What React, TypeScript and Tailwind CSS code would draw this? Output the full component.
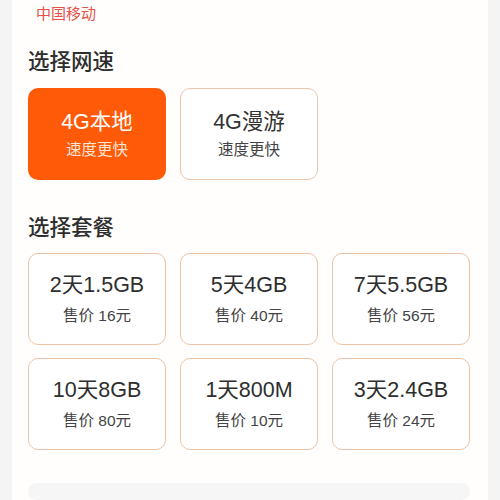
import { useState } from 'react';

const speeds = [
  { id: 'local', name: '4G本地', desc: '速度更快' },
  { id: 'roam', name: '4G漫游', desc: '速度更快' },
];

const packages = [
  { id: 'p1', name: '2天1.5GB', price: 16 },
  { id: 'p2', name: '5天4GB', price: 40 },
  { id: 'p3', name: '7天5.5GB', price: 56 },
  { id: 'p4', name: '10天8GB', price: 80 },
  { id: 'p5', name: '1天800M', price: 10 },
  { id: 'p6', name: '3天2.4GB', price: 24 },
];

export default function App() {
  const [speed, setSpeed] = useState('local');
  const [pkg, setPkg] = useState<string | null>(null);

  return (
    <div
      className="w-[500px] h-[500px] overflow-hidden bg-[#f4f4f4] flex"
      style={{ fontFamily: '"Liberation Sans", "Noto Sans CJK SC", sans-serif' }}
    >
      <div className="ml-3 w-[476px] bg-[#fffefc] pl-4 flex flex-col">
        {/* 运营商 */}
        <div className="pl-2 pt-[5px] h-[26px] text-[15px] leading-[18px] text-[#e4524a]">中国移动</div>

        {/* 选择网速 */}
        <h2 className="mt-[25px] text-[21.5px] leading-[28px] font-medium text-[#2e2e2e]">选择网速</h2>
        <div className="mt-[12px] flex gap-[14px]">
          {speeds.map((s) => {
            const active = speed === s.id;
            return (
              <button
                key={s.id}
                type="button"
                onClick={() => setSpeed(s.id)}
                className={
                  active
                    ? 'w-[138px] h-[92px] rounded-[10px] bg-[#ff5a08] text-white flex flex-col items-center justify-center'
                    : 'w-[138px] h-[92px] rounded-[10px] border border-[#ecc6ac] bg-white text-[#333] flex flex-col items-center justify-center'
                }
              >
                <span className="text-[21.5px] leading-[26px]">{s.name}</span>
                <span className={active ? 'mt-[5px] text-[15.5px] leading-[20px] text-[#ffe5d6]' : 'mt-[5px] text-[15.5px] leading-[20px] text-[#444]'}>
                  {s.desc}
                </span>
              </button>
            );
          })}
        </div>

        {/* 选择套餐 */}
        <h2 className="mt-[34px] text-[21.5px] leading-[28px] font-medium text-[#2e2e2e]">选择套餐</h2>
        <div className="mt-[11px] grid grid-cols-[138px_138px_138px] gap-x-[14px] gap-y-[13px]">
          {packages.map((p) => (
            <button
              key={p.id}
              type="button"
              onClick={() => setPkg(p.id)}
              className={
                pkg === p.id
                  ? 'h-[92px] rounded-[10px] border border-[#ff5a08] bg-[#fff4ee] flex flex-col items-center justify-center'
                  : 'h-[92px] rounded-[10px] border border-[#efc3a6] bg-white flex flex-col items-center justify-center'
              }
            >
              <span className="text-[21.5px] leading-[26px] text-[#2e2e2e]">{p.name}</span>
              <span className="mt-[8px] text-[15.5px] leading-[20px] text-[#444]">售价 {p.price}元</span>
            </button>
          ))}
        </div>

        {/* 底部 */}
        <div className="mt-[33px] w-[442px] h-[60px] rounded-[12px] bg-[#f6f6f6]" />
      </div>
    </div>
  );
}
